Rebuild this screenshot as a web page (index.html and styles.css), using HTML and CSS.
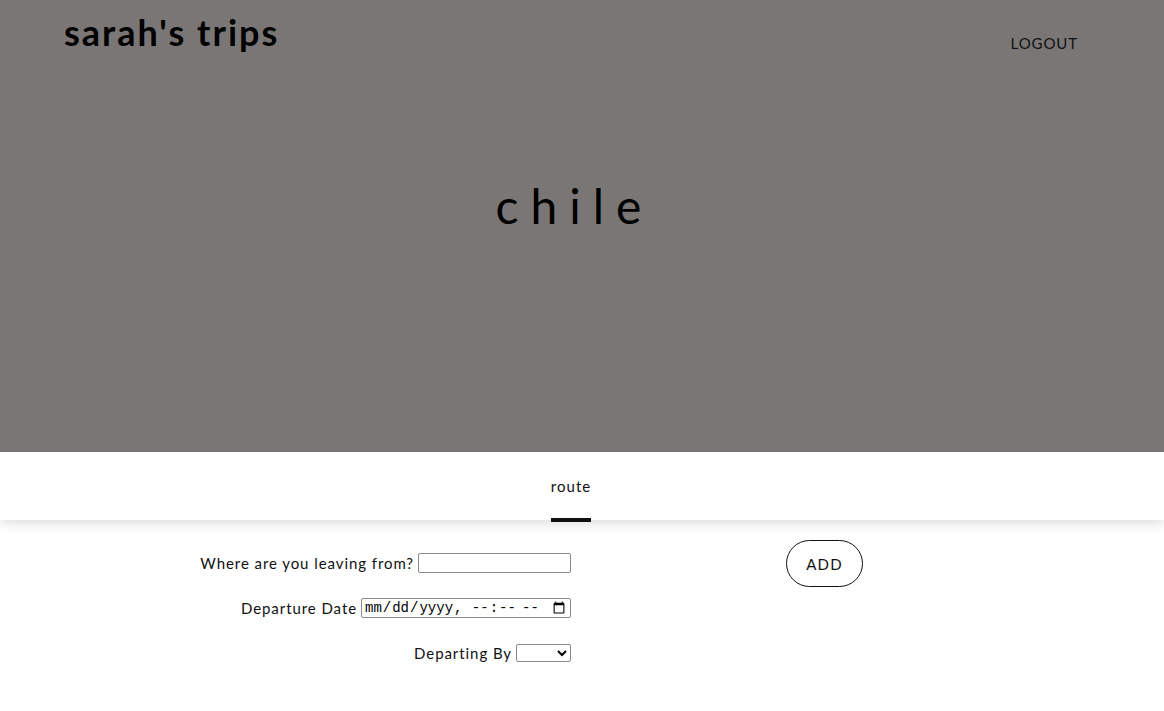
FILE: index.html
```html
<!DOCTYPE html>
<html>
<head>
<meta charset="utf-8">
<link rel="stylesheet" href="styles.css">
</head>
<body>
<header class="hero">
  <div class="topbar">
    <div class="brand">sarah's trips</div>
    <a class="logout" href="#">LOGOUT</a>
  </div>
  <h1 class="trip-name">chile</h1>
</header>
<nav class="tabs">
  <a class="tab active" href="#">route</a>
</nav>
<main class="content">
  <form class="route-form">
    <div class="row">
      <label for="from">Where are you leaving from?</label>
      <input id="from" class="text-input" type="text">
    </div>
    <div class="row">
      <label for="date">Departure Date</label>
      <input id="date" class="date-input" type="datetime-local">
    </div>
    <div class="row">
      <label for="by">Departing By</label>
      <select id="by" class="select-input"><option></option></select>
    </div>
  </form>
  <div class="actions">
    <button class="add-btn" type="button">ADD</button>
  </div>
</main>
</body>
</html>
```
FILE: styles.css
```css
* { box-sizing: border-box; }
html, body { margin: 0; padding: 0; }
body {
  font-family: Lato, "Open Sans", sans-serif;
  color: #111;
  background: #fff;
}
.hero {
  height: 452px;
  background: #7a7675;
  display: flex;
  flex-direction: column;
}
.topbar {
  display: flex;
  justify-content: space-between;
  align-items: flex-start;
  padding: 11px 86px 0 64px;
}
.brand {
  font-size: 36px;
  font-weight: 700;
  letter-spacing: 2px;
  color: #000;
  line-height: 42px;
}
.logout {
  margin-top: 22px;
  font-size: 15px;
  letter-spacing: 0.9px;
  color: #111;
  text-decoration: none;
  line-height: 20px;
}
.trip-name {
  margin: 123px 0 0;
  text-align: center;
  font-size: 48px;
  font-weight: 400;
  letter-spacing: 12px;
  padding-right: 15px;
  line-height: 60px;
  color: #000;
}
.tabs {
  height: 68px;
  background: #fff;
  display: flex;
  justify-content: center;
  padding-right: 22px;
  box-shadow: 0 4px 10px rgba(0,0,0,0.12);
  position: relative;
}
.tab {
  display: flex;
  align-items: center;
  padding-top: 2px;
  font-size: 15px;
  letter-spacing: 1px;
  color: #111;
  text-decoration: none;
  border-bottom: 4px solid transparent;
  margin-bottom: -2px;
}
.tab.active { border-bottom-color: #111; }
.content {
  display: flex;
  align-items: flex-start;
  padding-top: 20px;
}
.route-form {
  width: 571px;
  padding-top: 13px;
  display: flex;
  flex-direction: column;
  align-items: flex-end;
  gap: 25px;
}
.row {
  display: flex;
  align-items: center;
  height: 20px;
  gap: 4px;
}
.row label {
  font-size: 15px;
  letter-spacing: 0.93px;
  color: #111;
}
.text-input {
  width: 153px;
  height: 20px;
  border: 1px solid #8a8a8a;
  border-radius: 2px;
  padding: 0 3px;
}
.date-input {
  width: 210px;
  height: 20px;
  border: 1px solid #8a8a8a;
  border-radius: 2px;
  padding: 0 2px 0 2px;
  font-family: "Liberation Mono", "Courier New", monospace;
  font-size: 14px;
  color: #000;
}
.select-input {
  width: 55px;
  height: 18px;
  border: 1px solid #8a8a8a;
  border-radius: 2px;
  background: #fff;
  font-size: 12px;
}
.actions {
  margin-left: 215px;
}
.add-btn {
  width: 77px;
  height: 47px;
  border: 1px solid #111;
  border-radius: 24px;
  background: #fff;
  font-family: Lato, sans-serif;
  font-size: 15px;
  letter-spacing: 1.2px;
  color: #111;
  padding: 0;
}
```
